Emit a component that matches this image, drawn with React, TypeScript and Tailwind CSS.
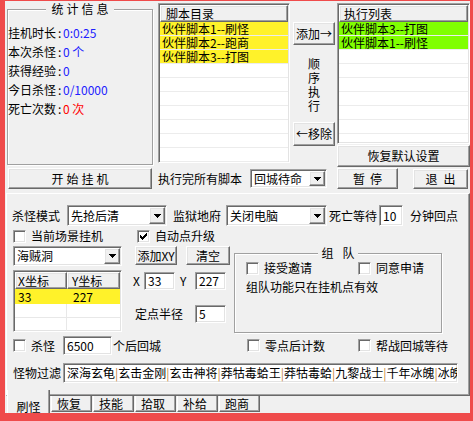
import React from "react";

const sunken =
  "bg-white border border-t-[#a0a0a0] border-l-[#a0a0a0] border-r-white border-b-white shadow-[inset_1px_1px_0_#696969,inset_-1px_-1px_0_#e3e3e3]";
const raised =
  "bg-[#f0f0f0] border border-t-white border-l-white border-r-[#696969] border-b-[#696969] shadow-[inset_-1px_-1px_0_#a0a0a0,inset_1px_1px_0_#e3e3e3]";
const groupBox =
  "border border-[#a0a0a0] shadow-[inset_1px_1px_0_#fff,1px_1px_0_#fff] shrink-0";

function Combo({ className, text }: { className: string; text: string }) {
  return (
    <div className={`${sunken} ${className} flex items-stretch p-[1px] shrink-0`}>
      <div className="flex-1 flex items-center pl-[2px] whitespace-nowrap overflow-hidden">{text}</div>
      <div className={`${raised} w-[16px] flex items-center justify-center`}>
        <svg width="7" height="4" viewBox="0 0 7 4" shapeRendering="crispEdges">
          <rect x="0" y="0" width="7" height="1" fill="#000" />
          <rect x="1" y="1" width="5" height="1" fill="#000" />
          <rect x="2" y="2" width="3" height="1" fill="#000" />
          <rect x="3" y="3" width="1" height="1" fill="#000" />
        </svg>
      </div>
    </div>
  );
}

function Check({ checked }: { checked?: boolean }) {
  return (
    <span className={`${sunken} w-[13px] h-[13px] shrink-0 flex items-center justify-center`}>
      {checked && (
        <svg width="7" height="7" viewBox="0 0 7 7" shapeRendering="crispEdges">
          <rect x="6" y="0" width="1" height="1" fill="#000" />
          <rect x="5" y="1" width="2" height="1" fill="#000" />
          <rect x="0" y="2" width="1" height="1" fill="#000" />
          <rect x="4" y="2" width="3" height="1" fill="#000" />
          <rect x="0" y="3" width="2" height="1" fill="#000" />
          <rect x="3" y="3" width="3" height="1" fill="#000" />
          <rect x="0" y="4" width="5" height="1" fill="#000" />
          <rect x="1" y="5" width="3" height="1" fill="#000" />
          <rect x="2" y="6" width="1" height="1" fill="#000" />
        </svg>
      )}
    </span>
  );
}

function CheckLabel({ label, checked, className = "" }: { label: string; checked?: boolean; className?: string }) {
  return (
    <div className={`flex items-center shrink-0 ${className}`}>
      <Check checked={checked} />
      <span className="ml-[5px] whitespace-nowrap">{label}</span>
    </div>
  );
}

function StatLine({ label, children }: { label: string; children: React.ReactNode }) {
  return (
    <div className="h-[19px] flex items-center whitespace-nowrap">
      <span className="w-[55px] shrink-0">
        {label}
        <span className="ml-[2px]">:</span>
      </span>
      {children}
    </div>
  );
}

const Sep = () => <span className="text-[#c9863a]">|</span>;

export default function App() {
  const scripts = ["伙伴脚本1--刷怪", "伙伴脚本2--跑商", "伙伴脚本3--打图"];
  const execs = ["伙伴脚本3--打图", "伙伴脚本1--刷怪"];
  const filters = ["深海玄龟", "玄击金刚", "玄击神将", "莽牯毒蛤王", "莽牯毒蛤", "九黎战士", "千年冰魄"];
  return (
    <div className="w-[473px] h-[421px] overflow-hidden bg-[#f0f0f0] border-l-[5px] border-t-[1px] border-r-[3px] border-b-[8px] border-[#ef4b4b] text-[12px] leading-[14px] text-black font-['Noto_Sans_CJK_SC',sans-serif] flex flex-col">
      {/* top section */}
      <div className="flex h-[166px] shrink-0">
        <fieldset className={`${groupBox} ml-[2px] mt-[1px] w-[146px] h-[163px]`}>
          <legend className="mx-auto pl-[5px] pr-[2px] bg-[#f0f0f0] tracking-[3px]">统计信息</legend>
          <div className="mt-[7px] flex flex-col">
            <StatLine label="挂机时长">
              <span className="text-[#2020ff]">0:0:25</span>
            </StatLine>
            <StatLine label="本次杀怪">
              <span className="text-[#2020ff]">0 个</span>
            </StatLine>
            <StatLine label="获得经验">
              <span className="text-[#2020ff]">0</span>
            </StatLine>
            <StatLine label="今日杀怪">
              <span className="text-[#2020ff]">0/10000</span>
            </StatLine>
            <StatLine label="死亡次数">
              <span className="text-[#ff0000]">0 次</span>
            </StatLine>
          </div>
        </fieldset>

        <div className={`${sunken} ml-[5px] mt-[2px] w-[132px] h-[160px] p-[1px] flex flex-col overflow-hidden shrink-0`}>
          <div className={`${raised} h-[17px] shrink-0 pl-[5px] flex items-center`}>脚本目录</div>
          {Array.from({ length: 11 }).map((_, i) => (
            <div
              key={i}
              className={`h-[14px] shrink-0 border-b border-b-[#ececec] pl-[2px] flex items-center whitespace-nowrap ${
                i < scripts.length ? "bg-[#fff22a]" : ""
              }`}
            >
              {scripts[i] ?? ""}
            </div>
          ))}
        </div>

        <div className="ml-[3px] mt-[21px] w-[42px] flex flex-col shrink-0">
          <div className={`${raised} h-[23px] flex items-center justify-center whitespace-nowrap`}>添加→</div>
          <div className="mt-[12px] flex flex-col items-center">
            {["顺", "序", "执", "行"].map((c) => (
              <span key={c} className="h-[14px]">
                {c}
              </span>
            ))}
          </div>
          <div className={`${raised} mt-[9px] h-[24px] flex items-center justify-center whitespace-nowrap`}>←移除</div>
        </div>

        <div className="ml-[2px] mt-[2px] w-[133px] flex flex-col shrink-0">
          <div className={`${sunken} h-[141px] p-[1px] flex flex-col overflow-hidden`}>
            <div className={`${raised} h-[17px] shrink-0 pl-[4px] flex items-center`}>执行列表</div>
            {Array.from({ length: 10 }).map((_, i) => (
              <div
                key={i}
                className={`h-[14px] shrink-0 border-b border-b-[#ececec] pl-[2px] flex items-center whitespace-nowrap ${
                  i < execs.length ? "bg-[#80ff00]" : ""
                }`}
              >
                {execs[i] ?? ""}
              </div>
            ))}
          </div>
          <div className={`${raised} mt-[1px] h-[22px] flex items-center justify-center`}>恢复默认设置</div>
        </div>
      </div>

      {/* row 2 */}
      <div className="flex items-center h-[23px] shrink-0">
        <div className={`${raised} ml-[3px] w-[144px] h-[21px] flex items-center justify-center gap-[3px] shrink-0`}>
          <span>开</span>
          <span>始</span>
          <span>挂</span>
          <span>机</span>
        </div>
        <div className="ml-[6px] w-[92px] whitespace-nowrap shrink-0">执行完所有脚本</div>
        <Combo className="w-[77px] h-[19px]" text="回城待命" />
        <div className={`${raised} ml-[10px] w-[61px] h-[21px] flex items-center justify-center gap-[5px] shrink-0`}>
          <span>暂</span>
          <span>停</span>
        </div>
        <div className={`${raised} ml-[15px] w-[55px] h-[20px] flex items-center justify-center gap-[6px] shrink-0`}>
          <span>退</span>
          <span>出</span>
        </div>
      </div>

      {/* main panel */}
      <div className="ml-[1px] mt-[3px] w-[464px] h-[203px] shrink-0 border border-t-white border-l-white border-r-[#696969] border-b-[#696969] shadow-[inset_-1px_-1px_0_#a0a0a0] flex flex-col">
        <div className="mt-[10px] h-[23px] pl-[5px] flex items-center shrink-0 whitespace-nowrap">
          <span className="shrink-0">杀怪模式</span>
          <Combo className="ml-[7px] w-[100px] h-[21px]" text="先抢后清" />
          <span className="ml-[6px] shrink-0">监狱地府</span>
          <Combo className="ml-[5px] w-[101px] h-[21px]" text="关闭电脑" />
          <span className="ml-[2px] shrink-0">死亡等待</span>
          <div className={`${sunken} ml-[2px] w-[24px] h-[21px] flex items-center pl-[3px] shrink-0`}>10</div>
          <span className="ml-[7px] shrink-0">分钟回点</span>
        </div>

        <div className="mt-[1px] h-[16px] pl-[6px] flex items-center shrink-0">
          <CheckLabel className="w-[124px]" label="当前场景挂机" />
          <CheckLabel label="自动点升级" checked />
        </div>

        <div className="mt-[2px] h-[87px] pl-[6px] flex shrink-0">
          <div className="w-[217px] flex flex-col shrink-0">
            <div className="flex h-[20px]">
              <Combo className="w-[109px] h-[20px]" text="海贼洞" />
              <div className={`${raised} ml-[13px] w-[42px] h-[19px] flex items-center justify-center shrink-0`}>添加XY</div>
              <div className={`${raised} ml-[9px] w-[44px] h-[19px] flex items-center justify-center shrink-0`}>清空</div>
            </div>
            <div className="mt-[4px] flex">
              <div className={`${sunken} w-[109px] h-[62px] p-[1px] flex flex-col overflow-hidden shrink-0`}>
                <div className="flex h-[17px] shrink-0">
                  <div className={`${raised} w-[52px] pl-[2px] flex items-center`}>X坐标</div>
                  <div className={`${raised} flex-1 pl-[4px] flex items-center`}>Y坐标</div>
                </div>
                <div className="flex h-[15px] shrink-0 bg-[#fff22a] items-center">
                  <div className="w-[52px] pl-[3px]">33</div>
                  <div className="pl-[6px]">227</div>
                </div>
                {[0, 1].map((i) => (
                  <div key={i} className="flex h-[14px] shrink-0 border-b border-b-[#e8e8e8]">
                    <div className="w-[52px] border-r border-r-[#e8e8e8]" />
                    <div className="flex-1" />
                  </div>
                ))}
              </div>
              <div className="ml-[10px] flex flex-col">
                <div className="mt-[2px] flex items-center h-[18px]">
                  <span className="w-[12px] pl-[1px] shrink-0">X</span>
                  <div className={`${sunken} w-[31px] h-[18px] pl-[3px] flex items-center shrink-0`}>33</div>
                  <span className="w-[20px] pl-[5px] shrink-0">Y</span>
                  <div className={`${sunken} w-[31px] h-[18px] pl-[3px] flex items-center shrink-0`}>227</div>
                </div>
                <div className="mt-[15px] flex items-center h-[18px]">
                  <span className="w-[63px] pl-[3px] shrink-0">定点半径</span>
                  <div className={`${sunken} w-[31px] h-[18px] pl-[3px] flex items-center shrink-0`}>5</div>
                </div>
              </div>
            </div>
          </div>

          <fieldset className={`${groupBox} ml-[4px] w-[208px] h-[87px]`}>
            <legend className="mx-auto px-[3px] bg-[#f0f0f0]">
              <span className="mr-[9px]">组</span>队
            </legend>
            <div className="mt-[1px] h-[14px] pl-[11px] flex items-center">
              <CheckLabel className="w-[112px]" label="接受邀请" />
              <CheckLabel label="同意申请" />
            </div>
            <div className="mt-[5px] pl-[11px] whitespace-nowrap">组队功能只在挂机点有效</div>
          </fieldset>
        </div>

        <div className="mt-[3px] h-[19px] pl-[6px] flex items-center shrink-0">
          <div className="w-[234px] flex items-center shrink-0">
            <CheckLabel className="w-[50px]" label="杀怪" />
            <div className={`${sunken} w-[49px] h-[19px] pl-[3px] flex items-center shrink-0`}>6500</div>
            <span className="ml-[1px] whitespace-nowrap">个后回城</span>
          </div>
          <CheckLabel className="w-[111px]" label="零点后计数" />
          <CheckLabel label="帮战回城等待" />
        </div>

        <div className="mt-[8px] h-[20px] pl-[6px] flex items-center shrink-0">
          <span className="w-[50px] shrink-0">怪物过滤</span>
          <div className={`${sunken} w-[395px] h-[20px] pl-[3px] flex items-center overflow-hidden whitespace-nowrap shrink-0`}>
            {filters.map((f) => (
              <React.Fragment key={f}>
                {f}
                <Sep />
              </React.Fragment>
            ))}
            冰魄
          </div>
        </div>
      </div>

      {/* tabs */}
      <div className="ml-[2px] flex items-start shrink-0 h-[16px]">
        <div className="relative z-10 -mt-[6px] w-[43px] h-[23px] shrink-0 bg-[#f0f0f0] border-l border-l-white border-r border-r-[#696969] shadow-[inset_-1px_0_0_#a0a0a0] flex justify-center pt-[10px]">
          刷怪
        </div>
        {["恢复", "技能", "拾取", "补给", "跑商"].map((t) => (
          <div
            key={t}
            className="ml-[1px] w-[41px] h-[16px] shrink-0 border-l border-l-white border-r border-r-[#696969] border-b border-b-[#696969] shadow-[inset_-1px_-1px_0_#a0a0a0] pl-[5px] flex items-center"
          >
            {t}
          </div>
        ))}
      </div>
    </div>
  );
}
